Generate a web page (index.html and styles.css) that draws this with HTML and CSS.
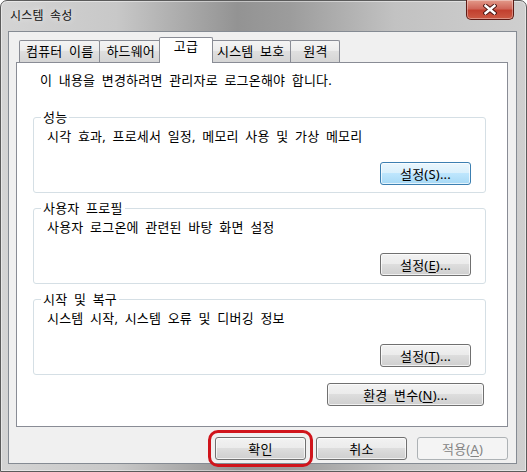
FILE: index.html
```html
<!DOCTYPE html>
<html lang="ko">
<head>
  <meta charset="UTF-8">
  <meta name="viewport" content="width=device-width, initial-scale=1.0">
  <title>시스템 속성</title>
  <link rel="stylesheet" href="styles.css">
</head>
<body>
  <div class="window">
    <div class="titlebar">
      <span class="title">시스템 속성</span>
      <button class="close-btn" aria-label="닫기">
        <svg width="14" height="11" viewBox="0 0 14 11">
          <path d="M2.5 1.8 L11.5 9.2 M11.5 1.8 L2.5 9.2" stroke="#4a1410" stroke-width="4.4" stroke-linecap="square"/>
          <path d="M2.5 1.8 L11.5 9.2 M11.5 1.8 L2.5 9.2" stroke="#fff" stroke-width="2.4" stroke-linecap="square"/>
        </svg>
      </button>
    </div>

    <div class="client">
      <div class="tabs">
        <div class="tab">컴퓨터 이름</div>
        <div class="tab">하드웨어</div>
        <div class="tab tab-active">고급</div>
        <div class="tab">시스템 보호</div>
        <div class="tab">원격</div>
      </div>

      <div class="panel">
        <p class="notice">이 내용을 변경하려면 관리자로 로그온해야 합니다.</p>

        <fieldset class="group">
          <legend>성능</legend>
          <p class="group-desc">시각 효과, 프로세서 일정, 메모리 사용 및 가상 메모리</p>
          <div class="group-actions">
            <button class="btn btn-focus">설정(S)...</button>
          </div>
        </fieldset>

        <fieldset class="group">
          <legend>사용자 프로필</legend>
          <p class="group-desc">사용자 로그온에 관련된 바탕 화면 설정</p>
          <div class="group-actions">
            <button class="btn">설정(<u>E</u>)...</button>
          </div>
        </fieldset>

        <fieldset class="group">
          <legend>시작 및 복구</legend>
          <p class="group-desc">시스템 시작, 시스템 오류 및 디버깅 정보</p>
          <div class="group-actions">
            <button class="btn">설정(<u>T</u>)...</button>
          </div>
        </fieldset>

        <div class="env-row">
          <button class="btn btn-wide">환경 변수(<u>N</u>)...</button>
        </div>
      </div>

      <div class="dialog-buttons">
        <button class="btn btn-marked">확인</button>
        <button class="btn">취소</button>
        <button class="btn" disabled>적용(<u>A</u>)</button>
      </div>
    </div>
  </div>
</body>
</html>
```

FILE: styles.css
```css
* {
  box-sizing: border-box;
}

body {
  width: 527px;
  height: 472px;
  margin: 0;
  overflow: hidden;
  font-family: "Noto Sans", "Noto Sans CJK KR", sans-serif;
  font-size: 13px;
  line-height: 16px;
  letter-spacing: 0.2px;
  word-spacing: 3px; /* 굴림 느낌의 넓은 띄어쓰기 */
  color: #000;
  background: #fff;
}

/* 창 프레임 */
.window {
  height: 472px;
  display: flex;
  flex-direction: column;
  padding: 0 9px 7px 7px;
  border: 1px solid #5b5b5b;
  border-radius: 7px 7px 0 0;
  background: linear-gradient(90deg, #d4d4d4 0%, #c8c8c8 22%, #939393 45%, #9c9c9c 55%, #c2c2c2 75%, #cfcfcf 100%);
  box-shadow: inset 0 0 0 1px rgba(255, 255, 255, 0.45);
}

.titlebar {
  height: 30px;
  display: flex;
  align-items: flex-start;
  justify-content: space-between;
}

.title {
  margin: 7px 0 0 2px;
  font-size: 12px;
  color: #111;
  text-shadow: 0 0 6px rgba(255, 255, 255, 0.8);
}

.close-btn {
  width: 48px;
  height: 20px;
  margin: -1px 3px 0 0;
  padding: 0;
  display: flex;
  align-items: center;
  justify-content: center;
  border: 1px solid #5e1b15;
  border-top: none;
  border-radius: 0 0 5px 5px;
  background: linear-gradient(#e39a8a 0%, #d0675a 45%, #c2402f 55%, #cc5a44 100%);
  box-shadow: inset 0 0 0 1px rgba(255, 255, 255, 0.35);
}

/* 클라이언트 영역 */
.client {
  flex: 1;
  display: flex;
  flex-direction: column;
  padding: 5px 8px 3px 7px;
  background: #f0f0f0;
  border: 1px solid #858b93;
}

.tabs {
  height: 26px;
  margin-bottom: -1px;
  padding-left: 3px;
  display: flex;
  align-items: flex-end;
  position: relative;
  z-index: 1;
}

.tab {
  min-width: 50px;
  height: 22px;
  margin: 0 -1px 1px 0;
  padding: 0 6px;
  line-height: 21px;
  text-align: center;
  white-space: nowrap;
  border: 1px solid #898c95;
  border-bottom: none;
  border-radius: 2px 2px 0 0;
  background: linear-gradient(#f4f4f4 0%, #ececec 45%, #dfdfdf 50%, #d5d5d5 100%);
}

.tab-active {
  min-width: 54px;
  height: 26px;
  margin: 0 -3px 0 -2px;
  line-height: 17px;
  background: #fff;
  position: relative;
  z-index: 2;
}

.panel {
  flex: 1;
  padding: 9px 21px 0 16px;
  background: #fff;
  border: 1px solid #898c95;
}

.notice {
  margin: 0 0 21px 7px;
}

.group {
  min-width: 0;
  margin: 0 0 7px;
  padding: 0 14px 7px 7px;
  border: 1px solid #d5dfe5;
  border-radius: 3px;
}

.group legend {
  padding: 0 2px;
}

.group-desc {
  margin: 0;
  padding: 3px 0 0 6px;
}

.group-actions {
  margin-top: 18px;
  display: flex;
  justify-content: flex-end;
}

.env-row {
  margin-top: 8px;
  padding-right: 2px;
  display: flex;
  justify-content: flex-end;
}

/* 버튼 */
.btn {
  width: 91px;
  height: 23px;
  padding: 0;
  font: inherit;
  letter-spacing: inherit;
  word-spacing: inherit;
  color: #000;
  border: 1px solid #707070;
  border-radius: 3px;
  background: linear-gradient(#f2f2f2 0%, #ebebeb 49%, #dddddd 50%, #cfcfcf 100%);
  box-shadow: inset 0 0 0 1px rgba(255, 255, 255, 0.7);
}

.btn u {
  text-underline-offset: 2px;
}

.btn-focus {
  border-color: #3c7fb1;
  background: linear-gradient(#eaf6fd 0%, #d9f0fc 49%, #bee6fd 50%, #a7d9f5 100%);
}

.btn-wide {
  width: 157px;
}

.btn:disabled {
  color: #838383;
  border-color: #adb2b5;
  background: #f4f4f4;
  box-shadow: none;
}

.dialog-buttons {
  margin-top: 10px;
  display: flex;
  justify-content: flex-end;
  gap: 10px;
}

.btn-marked {
  outline: 3px solid #d0141b;
  outline-offset: 4px;
}
```
